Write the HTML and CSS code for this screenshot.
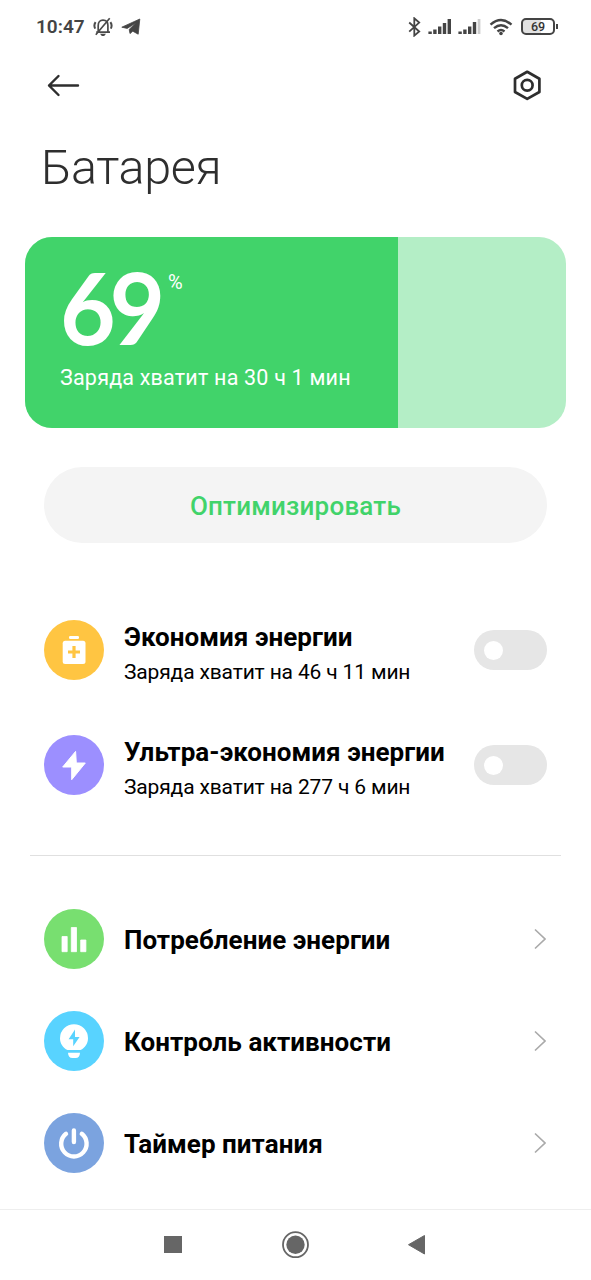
FILE: index.html
```html
<!DOCTYPE html>
<html lang="ru">
<head>
<meta charset="utf-8">
<title>Батарея</title>
<link rel="stylesheet" href="styles.css">
</head>
<body>
<div class="screen">
  <div class="status">
    <span class="clock">10:47</span>
    <svg class="bell" width="20" height="20" viewBox="0 0 20 20" fill="none" stroke="#4a4a4a" stroke-width="1.700">
      <path d="M3.200 15.200h13.800M5.200 14.600V8.500c0-3.200 1.800-5.300 4.800-5.300s4.900 2.100 4.900 5.300v6.100M16.700 1.200L2.800 17.800"/>
      <path d="M2.600 5.200Q.4 8.200 2.200 11.600M17.400 5.200Q19.600 8.200 17.800 11.600" stroke-width="2"/>
      <path d="M7 16.800h6l-1.800 2.100H8.800z" fill="#4a4a4a" stroke="none"/>
    </svg>
    <svg class="plane" width="20" height="18" viewBox="0 0 20 18"><path d="M.8 9.200L18.800 1 17.200 16.200 11.800 13.200 9 15.600 8.200 11.400 14.600 5 6.200 10.400z" fill="#444" stroke="#444" stroke-width=".8" stroke-linejoin="round"/></svg>
    <div class="signals">
      <svg width="13" height="20" viewBox="0 0 13 20" fill="none" stroke="#444" stroke-width="1.800"><path d="M1.200 5.500l10 9L6.300 18.600V1.300l4.900 4.300-10 9"/></svg>
      <svg class="bars" width="23" height="17" viewBox="0 0 23 17" fill="#444"><path d="M.4 13.600h3.400V16H.4zM5.200 11.600h3.400V16H5.200zM10 8.400h3.400V16H10zM14.800 5h3.400v11h-3.400zM19.600 1H23v15h-3.400z"/></svg>
      <svg class="bars" width="23" height="17" viewBox="0 0 23 17" fill="#444"><path d="M.4 13.600h3.400V16H.4zM5.200 11.600h3.400V16H5.200zM10 8.400h3.400V16H10zM14.800 4h3.400v12h-3.400z"/><path d="M19.700 1h2.700v15h-2.700z" fill="#cdcdcd"/></svg>
      <svg class="wifi" width="24" height="18" viewBox="0 0 24 18" fill="none" stroke="#444" stroke-width="2.400"><path d="M1.500 6.600Q12-2.600 22.500 6.600M5 10.200q7-6 14 0M8.500 13.500q3.500-3 7 0"/><circle cx="12" cy="15.500" r="1.800" fill="#444" stroke="none"/></svg>
      <div class="cell"><span>69</span></div><i class="cap"></i>
    </div>
  </div>
  <header class="bar">
    <svg width="34" height="24" viewBox="0 0 34 24" fill="none" stroke="#2e2e2e" stroke-width="2.400" stroke-linecap="round" stroke-linejoin="round"><path d="M31 12.500H2M11.500 3L2 12.500l9.500 9.500"/></svg>
    <svg width="30" height="32" viewBox="0 0 30 32" fill="none" stroke="#2e2e2e" stroke-width="2.700" stroke-linejoin="round"><path d="M15.200 2.800l12.200 6.900v13.300l-12.200 6.900L3 23V9.700z"/><circle cx="15.200" cy="16.300" r="5.400"/></svg>
  </header>
  <h1 class="title">Батарея</h1>
  <section class="battery">
    <div class="charge">
      <div class="level"><span class="digits">69</span><span class="percent">%</span></div>
      <p class="left">Заряда хватит на 30 ч 1 мин</p>
    </div>
  </section>
  <button class="optimize">Оптимизировать</button>
  <section class="modes">
    <div class="row">
      <svg class="icon" viewBox="0 0 60 60"><circle cx="30" cy="30" r="30" fill="#ffc542"/><rect x="25" y="16" width="10" height="3" rx="1.300" fill="#fff"/><rect x="18.700" y="20.700" width="22.800" height="23.300" rx="2.500" fill="#fff"/><path d="M30 26v12M24 32h12" stroke="#ffc542" stroke-width="3.200"/></svg>
      <div class="info"><h2>Экономия энергии</h2><p>Заряда хватит на 46 ч 11 мин</p></div>
      <span class="switch"></span>
    </div>
    <div class="row">
      <svg class="icon" viewBox="0 0 60 60"><circle cx="30" cy="30" r="30" fill="#9c8fff"/><path d="M31.600 16.400L18.700 32h9v12.700L41.300 28h-9z" fill="#fff" stroke="#fff" stroke-width="1" stroke-linejoin="round"/></svg>
      <div class="info"><h2>Ультра-экономия энергии</h2><p>Заряда хватит на 277 ч 6 мин</p></div>
      <span class="switch"></span>
    </div>
  </section>
  <section class="links">
    <div class="row">
      <svg class="icon" viewBox="0 0 60 60"><circle cx="30" cy="30" r="30" fill="#78df70"/><path d="M18 27.500h5.200V42.700H18zM27.300 18.500h5.200v24.200h-5.200zM36.700 31h5.200v11.700h-5.200z" fill="#fff" stroke="#fff" stroke-width=".8" stroke-linejoin="round"/></svg>
      <h2>Потребление энергии</h2>
      <svg class="chev" viewBox="0 0 12 22"><path d="M1 1.500l10 9.500-10 9.500"/></svg>
    </div>
    <div class="row">
      <svg class="icon" viewBox="0 0 60 60"><circle cx="30" cy="30" r="30" fill="#58d3ff"/><path d="M23.500 39C19 36.800 16 32.500 16 27.200a14 14 0 0 1 28 0c0 5.300-3 9.600-7.500 11.800z" fill="#fff"/><path d="M24 41.800h12q-.3 5.200-4.300 5.200h-3.400q-4 0-4.300-5.200z" fill="#fff"/><path d="M31 18.500L24.600 28.300h4.600v7L35.600 26H31z" fill="#58d3ff"/></svg>
      <h2>Контроль активности</h2>
      <svg class="chev" viewBox="0 0 12 22"><path d="M1 1.500l10 9.500-10 9.500"/></svg>
    </div>
    <div class="row">
      <svg class="icon" viewBox="0 0 60 60"><circle cx="30" cy="30" r="30" fill="#7ba3df"/><path d="M22 20.800a12.700 12.700 0 1 0 15.800 0M29.900 17.500v11.500" fill="none" stroke="#fff" stroke-width="4.400" stroke-linecap="round"/></svg>
      <h2>Таймер питания</h2>
      <svg class="chev" viewBox="0 0 12 22"><path d="M1 1.500l10 9.500-10 9.500"/></svg>
    </div>
  </section>
  <nav class="nav">
    <svg width="18" height="18"><path d="M0 0h18v17H0z" fill="#666"/></svg>
    <svg width="28" height="28"><circle cx="14.500" cy="13.700" r="12.500" fill="none" stroke="#666" stroke-width="1.800"/><circle cx="14.500" cy="13.700" r="9.200" fill="#666"/></svg>
    <svg width="18" height="20"><path d="M16.500 .5v18.500L.5 9.700z" fill="#666" stroke="#666" stroke-linejoin="round"/></svg>
  </nav>
</div>
</body>
</html>
```
FILE: styles.css
```css
* { box-sizing: border-box; }
body { margin: 0; background: #fff; font-family: Roboto, sans-serif; color: #000; }
h1, h2, p { margin: 0; }
svg { display: block; flex: none; }
.screen { width: 591px; height: 1280px; display: flex; flex-direction: column; overflow: hidden; }
.status { height: 53px; flex: none; display: flex; align-items: center; padding-left: 36px; padding-right: 33px; }
.clock { font-size: 19px; font-weight: 600; line-height: 22px; color: #444; width: 57px; }
.plane { margin-left: 8px; }
.signals { margin-left: auto; display: flex; align-items: center; }
.bars { margin-left: 7px; }
.wifi { margin-left: 8px; }
.cell { width: 34px; height: 17px; margin-left: 8px; border: 2px solid #444; border-radius: 5px; background: linear-gradient(90deg, #e2e2e2 60%, #fff 60%); font-size: 12.5px; font-weight: 500; line-height: 14px; text-align: center; color: #333; }
.cap { width: 2px; height: 5px; background: #444; margin-left: 1px; }
.bar { height: 64px; flex: none; display: flex; justify-content: space-between; align-items: center; padding: 0 49px 0 47px; }
.title { margin: 23px 0 0 41px; height: 56px; font-size: 48.5px; line-height: 56px; font-weight: 300; letter-spacing: -.4px; color: #2e2e2e; }
.battery { flex: none; margin: 41px 25px 0; width: 541px; height: 191px; border-radius: 27px; background: #b4eec6; overflow: hidden; }
.charge { width: 373px; height: 191px; background: #41d36a; color: #fff; padding: 28px 0 0 35px; }
.level { display: flex; height: 100px; }
.digits { width: 108px; font-family: Lato, sans-serif; font-size: 100px; line-height: 83px; font-weight: 700; letter-spacing: -6.5px; transform: scaleX(.96); transform-origin: 0 0; }
.percent { font-size: 20px; line-height: 35px; }
.left { font-size: 21.5px; line-height: 26px; letter-spacing: .2px; white-space: nowrap; }
.optimize { flex: none; margin: 39px 44px 0; height: 76px; border: 0; border-radius: 38px; background: #f4f4f4; color: #41d36a; font: 500 26px Roboto, sans-serif; letter-spacing: .2px; padding: 2px 0 0; }
.modes { margin: 77px 44px 0; display: grid; gap: 55px; }
.row { display: flex; align-items: center; height: 60px; }
.icon { width: 60px; height: 60px; margin-right: 20px; }
h2 { font-size: 26px; line-height: 32px; font-weight: 700; letter-spacing: .05px; white-space: nowrap; padding-top: 1px; }
.info { padding-top: 6px; }
.info h2 { padding-top: 0; }
.info p { font-size: 21px; line-height: 28px; margin-top: 5px; letter-spacing: -.15px; white-space: nowrap; }
.switch { width: 73px; height: 40px; margin-left: auto; border-radius: 20px; background: #e6e6e6; padding: 10.5px 10px; }
.switch::before { content: ""; display: block; width: 19px; height: 19px; border-radius: 50%; background: #fff; }
.links { margin: 60px 30px 0; padding: 53px 14px 0; border-top: 1px solid #e0e0e0; display: grid; gap: 42px; }
.chev { width: 12px; height: 22px; margin-left: auto; margin-right: 1px; fill: none; stroke: #aaa; stroke-width: 1.700; }
.nav { margin-top: auto; height: 71px; flex: none; border-top: 1px solid #eee; display: flex; align-items: center; justify-content: space-between; padding: 0 165px 1px 164px; }
```
